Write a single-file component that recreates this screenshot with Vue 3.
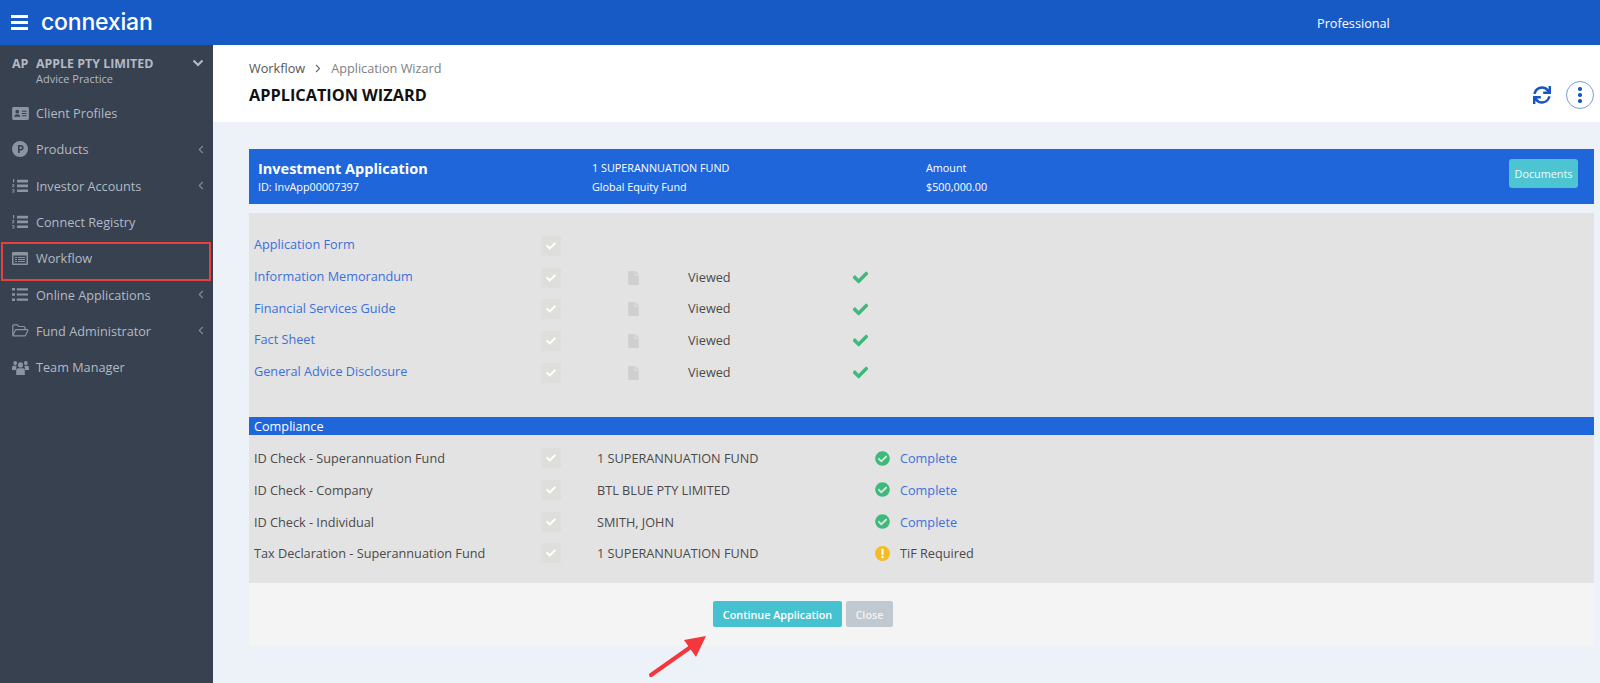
<script setup>
const menu = [
  { label: 'Client Profiles', icon: 'card' },
  { label: 'Products', icon: 'product', arrow: true },
  { label: 'Investor Accounts', icon: 'numbered', arrow: true },
  { label: 'Connect Registry', icon: 'numbered' },
  { label: 'Workflow', icon: 'workflow' },
  { label: 'Online Applications', icon: 'list', arrow: true },
  { label: 'Fund Administrator', icon: 'folder', arrow: true },
  { label: 'Team Manager', icon: 'users' }
]

const documents = [
  { name: 'Application Form', viewed: false },
  { name: 'Information Memorandum', viewed: true },
  { name: 'Financial Services Guide', viewed: true },
  { name: 'Fact Sheet', viewed: true },
  { name: 'General Advice Disclosure', viewed: true }
]

const compliance = [
  { name: 'ID Check - Superannuation Fund', entity: '1 SUPERANNUATION FUND', status: 'Complete', done: true },
  { name: 'ID Check - Company', entity: 'BTL BLUE PTY LIMITED', status: 'Complete', done: true },
  { name: 'ID Check - Individual', entity: 'SMITH, JOHN', status: 'Complete', done: true },
  { name: 'Tax Declaration - Superannuation Fund', entity: '1 SUPERANNUATION FUND', status: 'TiF Required', done: false }
]

const checkPath = 'M173.9 439.4l-166.4-166.4c-10-10-10-26.2 0-36.2l36.2-36.2c10-10 26.2-10 36.2 0L192 312.7 432.1 72.6c10-10 26.2-10 36.2 0l36.2 36.2c10 10 10 26.2 0 36.2l-294.4 294.4c-10 10-26.2 10-36.2 0z'
const circleCheckPath = 'M504 256c0 137-111 248-248 248S8 393 8 256 119 8 256 8s248 111 248 248zM227.3 387.3l184-184c6.2-6.2 6.2-16.4 0-22.6l-22.6-22.6c-6.2-6.2-16.4-6.2-22.6 0L216 308.1l-70.1-70.1c-6.2-6.2-16.4-6.2-22.6 0l-22.6 22.6c-6.2 6.2-6.2 16.4 0 22.6l104 104c6.2 6.3 16.4 6.3 22.6.1z'
const filePath = 'M224 136V0H24C10.7 0 0 10.7 0 24v464c0 13.3 10.7 24 24 24h336c13.3 0 24-10.7 24-24V160H248c-13.2 0-24-10.8-24-24zm160-14.1v6.1H256V0h6.1c6.4 0 12.5 2.5 17 7l97.9 98c4.5 4.5 7 10.6 7 16.9z'
const syncPath = 'M440.65 12.57l4 82.77A247.16 247.16 0 0 0 255.83 8C134.73 8 33.91 94.92 12.29 209.82A12 12 0 0 0 24.09 224h49.05a12 12 0 0 0 11.67-9.26 175.91 175.91 0 0 1 317-56.94l-101.46-4.86a12 12 0 0 0-12.57 12v47.41a12 12 0 0 0 12 12H500a12 12 0 0 0 12-12V12a12 12 0 0 0-12-12h-47.37a12 12 0 0 0-11.98 12.57zM255.83 432a175.61 175.61 0 0 1-146-77.8l101.8 4.87a12 12 0 0 0 12.57-12v-47.4a12 12 0 0 0-12-12H12a12 12 0 0 0-12 12V500a12 12 0 0 0 12 12h47.35a12 12 0 0 0 12-12.6l-4.15-82.57A247.17 247.17 0 0 0 255.83 504c121.11 0 221.93-86.92 243.55-201.82a12 12 0 0 0-11.8-14.18h-49.05a12 12 0 0 0-11.67 9.26A175.86 175.86 0 0 1 255.83 432z'
</script>

<template>
  <div class="app">
    <header class="topbar">
      <div class="burger"><span></span><span></span><span></span></div>
      <div class="logo">connexian</div>
      <div class="plan">Professional</div>
    </header>

    <div class="body">
      <aside class="sidebar">
        <div class="account">
          <span class="initials">AP</span>
          <div class="account-text">
            <div class="account-name">APPLE PTY LIMITED</div>
            <div class="account-type">Advice Practice</div>
          </div>
          <svg class="account-chevron" viewBox="0 0 12 8" width="12" height="8">
            <path d="M1.5 1.5 6 6l4.5-4.5" fill="none" stroke="currentColor" stroke-width="2.2" />
          </svg>
        </div>

        <nav>
          <a v-for="item in menu" :key="item.label" class="nav-item">
            <span class="nav-icon">
              <svg v-if="item.icon === 'card'" viewBox="0 0 18 14" width="17" height="13">
                <path fill="currentColor" fill-rule="evenodd" d="M1.5 0h15A1.5 1.5 0 0 1 18 1.500v11a1.500 1.500 0 0 1-1.500 1.500h-15A1.500 1.500 0 0 1 0 12.500v-11A1.500 1.500 0 0 1 1.500 0zM5.500 3a2 2 0 1 0 0 4 2 2 0 0 0 0-4zM2.200 10.500h6.600c0-1.500-1.400-2.700-3.300-2.700s-3.300 1.200-3.300 2.700zM10.500 4v1h5V4zm0 2.500v1h5v-1zm0 2.500v1h5V9z" />
              </svg>
              <svg v-else-if="item.icon === 'product'" viewBox="0 0 16 16" width="16" height="16">
                <path fill="currentColor" fill-rule="evenodd" d="M8 0a8 8 0 1 1 0 16A8 8 0 0 1 8 0zM6 4v8h1.700V9.400h1.200a2.700 2.700 0 0 0 0-5.400zm1.700 1.500h1.100a1.200 1.200 0 0 1 0 2.400H7.700z" />
              </svg>
              <svg v-else-if="item.icon === 'numbered'" viewBox="0 0 16 14" width="16" height="14">
                <path fill="currentColor" d="M5 .8h11v2.600H5zm0 4.800h11v2.600H5zm0 4.800h11V13H5zM1 0h1.200v3.600H1zM0 5.200h2.400v1L1 7.400h1.500v.8H0v-.8l1.400-1.300H0zm0 5h2.400v3.300H0v-.7h1.600v-.6H.6v-.6h1v-.6H0z" />
              </svg>
              <svg v-else-if="item.icon === 'workflow'" viewBox="0 0 16 13" width="16" height="13">
                <path fill="currentColor" fill-rule="evenodd" d="M1 0h14a1 1 0 0 1 1 1v11a1 1 0 0 1-1 1H1a1 1 0 0 1-1-1V1a1 1 0 0 1 1-1zm.500 3.500v8h13v-8zM3 5h2v1H3zm0 2h2v1H3zm0 2h2v1H3zm3-4h7v1H6zm0 2h7v1H6zm0 2h7v1H6z" />
              </svg>
              <svg v-else-if="item.icon === 'list'" viewBox="0 0 16 13" width="16" height="13">
                <path fill="currentColor" d="M0 0h3v2.600H0zm0 5.200h3v2.600H0zm0 5.200h3V13H0zM4.800.2H16v2.200H4.800zm0 5.200H16v2.200H4.800zm0 5.200H16v2.200H4.800z" />
              </svg>
              <svg v-else-if="item.icon === 'folder'" viewBox="0 0 17 13" width="17" height="13">
                <path fill="none" stroke="currentColor" stroke-width="1.200" d="M.8 11.500V1.800a1 1 0 0 1 1-1h3.500l1.600 1.700h5a1 1 0 0 1 1 1v1.700M.8 11.500l2.500-5.200a1 1 0 0 1 .9-.6h11a.7.700 0 0 1 .6 1l-2.200 4.600a1 1 0 0 1-.9.600H1.500a.7.700 0 0 1-.7-.4z" />
              </svg>
              <svg v-else viewBox="0 0 17 14" width="17" height="15" preserveAspectRatio="none">
                <path fill="currentColor" d="M3.200 1a1.900 1.900 0 1 1 0 3.800 1.900 1.900 0 0 1 0-3.800zm10.600 0a1.900 1.900 0 1 1 0 3.800 1.900 1.900 0 0 1 0-3.800zM8.500 2.200a2.500 2.500 0 1 1 0 5 2.500 2.500 0 0 1 0-5zM0 7.200c0-1 .7-1.800 1.600-1.800h2.200c.4 0 .7.100 1 .3-.4.600-.7 1.200-.7 2l-.1 1.600H0zm17 0c0-1-.7-1.800-1.600-1.800h-2.200c-.4 0-.7.100-1 .3.400.6.700 1.200.7 2l.1 1.600H17zM6 7.700h5c1 0 1.800.8 1.800 1.800V14H4.200V9.500c0-1 .8-1.800 1.800-1.800z" />
              </svg>
            </span>
            <span class="nav-label">{{ item.label }}</span>
            <svg v-if="item.arrow" class="nav-arrow" viewBox="0 0 6 9" width="6" height="9">
              <path d="M4.800 1 1.300 4.500 4.800 8" fill="none" stroke="currentColor" stroke-width="1.300" />
            </svg>
          </a>
        </nav>
      </aside>

      <main class="main">
        <div class="page-head">
          <div>
            <div class="crumbs">
              <span class="crumb-first">Workflow</span>
              <svg viewBox="0 0 6 9" width="6" height="9"><path d="M1 1l3.500 3.500L1 8" fill="none" stroke="#666" stroke-width="1.100" /></svg>
              <span class="crumb-last">Application Wizard</span>
            </div>
            <h1 class="title">APPLICATION WIZARD</h1>
          </div>
          <div class="head-actions">
            <svg viewBox="0 0 512 512" width="18" height="18"><path fill="#1557c2" :d="syncPath" /></svg>
            <span class="more"><i></i><i></i><i></i></span>
          </div>
        </div>

        <div class="content">
          <section class="app-card">
            <div class="app-col-a">
              <div class="app-title">Investment Application</div>
              <div class="app-id">ID: InvApp00007397</div>
            </div>
            <div class="app-col-b">
              <div class="app-line">1 SUPERANNUATION FUND</div>
              <div class="app-line">Global Equity Fund</div>
            </div>
            <div class="app-col-c">
              <div class="app-line">Amount</div>
              <div class="app-line">$500,000.00</div>
            </div>
            <button class="docs-btn">Documents</button>
          </section>

          <section class="panel">
            <div class="doc-rows">
              <div v-for="doc in documents" :key="doc.name" class="doc-row">
                <a class="link">{{ doc.name }}</a>
                <span class="tick">
                  <svg viewBox="0 0 512 512" width="10" height="10"><path fill="#fff" :d="checkPath" /></svg>
                </span>
                <template v-if="doc.viewed">
                  <svg class="file" viewBox="0 0 384 512" width="11" height="14"><path fill="#cfcfcf" :d="filePath" /></svg>
                  <span class="viewed">Viewed</span>
                  <svg class="green-check" viewBox="0 0 512 512" width="15" height="15"><path fill="#3cb97b" stroke="#3cb97b" stroke-width="28" :d="checkPath" /></svg>
                </template>
              </div>
            </div>

            <div class="section-bar">Compliance</div>

            <div class="check-rows">
              <div v-for="row in compliance" :key="row.name" class="check-row">
                <span>{{ row.name }}</span>
                <span class="tick">
                  <svg viewBox="0 0 512 512" width="10" height="10"><path fill="#fff" :d="checkPath" /></svg>
                </span>
                <span>{{ row.entity }}</span>
                <svg v-if="row.done" viewBox="0 0 512 512" width="15" height="15"><path fill="#3cb97b" :d="circleCheckPath" /></svg>
                <svg v-else viewBox="0 0 16 16" width="15" height="15">
                  <circle cx="8" cy="8" r="8" fill="#f5bd22" />
                  <rect x="6.900" y="3" width="2.200" height="6.500" rx="0.800" fill="#fff" />
                  <circle cx="8" cy="11.800" r="1.300" fill="#fff" />
                </svg>
                <a v-if="row.done" class="link">{{ row.status }}</a>
                <span v-else>{{ row.status }}</span>
              </div>
            </div>
          </section>

          <footer class="actions">
            <button class="btn btn-continue">Continue Application</button>
            <button class="btn btn-close">Close</button>
          </footer>
        </div>
      </main>
    </div>

    <!-- annotation marks laid over the screenshot -->
    <div class="mark-box"></div>
    <svg class="mark-arrow" viewBox="0 0 64 46" width="64" height="46">
      <path d="M3 43 47 12" stroke="#f4373c" stroke-width="4" stroke-linecap="round" fill="none" />
      <path d="M58 4 36 8l12 17z" fill="#f4373c" />
    </svg>
  </div>
</template>

<style>
html,
body {
  margin: 0;
  background: #edf1f8;
}
</style>

<style scoped>
.app {
  position: relative;
  width: 1600px;
  height: 683px;
  overflow: hidden;
  display: flex;
  flex-direction: column;
  background: #edf1f8;
  font-family: "Open Sans", sans-serif;
  font-size: 12.700px;
  color: #4a4a4a;
}

.topbar {
  height: 45px;
  flex: none;
  display: flex;
  align-items: center;
  background: #175ac6;
  color: #fff;
}

.burger {
  margin-left: 11px;
  width: 17px;
  display: flex;
  flex-direction: column;
  gap: 3px;
}

.burger span {
  height: 3px;
  background: #fff;
}

.logo {
  margin-left: 13px;
  font-family: Inter, sans-serif;
  font-size: 23px;
  font-weight: 500;
  letter-spacing: -0.2px;
  line-height: 1;
  width: 1276px;
}

.body {
  flex: 1;
  display: flex;
  min-height: 0;
}

.sidebar {
  width: 213px;
  flex: none;
  background: #374150;
  color: #b3b9c4;
}

.account {
  height: 50px;
  box-sizing: border-box;
  padding: 11px 9px 0 12px;
  display: flex;
  align-items: flex-start;
}

.initials {
  width: 24px;
  font-size: 12.500px;
  font-weight: 700;
  line-height: 15px;
}

.account-text {
  flex: 1;
}

.account-name {
  font-size: 12.400px;
  font-weight: 700;
  line-height: 15px;
}

.account-type {
  font-size: 11px;
  line-height: 16px;
}

.account-chevron {
  margin-top: 3px;
}

.nav-item {
  height: 36.300px;
  display: flex;
  align-items: center;
}

.nav-icon {
  width: 24px;
  margin-left: 12px;
  display: flex;
  align-items: center;
  color: #8d94a1;
}

.nav-label {
  flex: 1;
}

.nav-arrow {
  margin-right: 9px;
  color: #7f8693;
}

.main {
  flex: 1;
  display: flex;
  flex-direction: column;
  min-width: 0;
}

.page-head {
  height: 77px;
  flex: none;
  box-sizing: border-box;
  padding: 14px 6px 0 36px;
  background: #fff;
  display: flex;
  justify-content: space-between;
}

.crumbs {
  display: flex;
  align-items: center;
  gap: 10px;
  line-height: 18px;
}

.crumb-first {
  color: #555;
}

.crumb-last {
  color: #808080;
}

.title {
  margin: 8px 0 0;
  font-size: 16.300px;
  font-weight: 700;
  line-height: 20px;
  color: #111;
}

.head-actions {
  display: flex;
  align-items: center;
  gap: 15px;
  height: 28px;
  margin-top: 22px;
}

.more {
  width: 28px;
  height: 28px;
  box-sizing: border-box;
  border: 1px solid #7a9be0;
  border-radius: 50%;
  display: flex;
  flex-direction: column;
  align-items: center;
  justify-content: center;
  gap: 2.500px;
}

.more i {
  width: 3.500px;
  height: 3.500px;
  border-radius: 50%;
  background: #1557c2;
}

.content {
  flex: 1;
  padding: 27px 6px 0 36px;
}

.app-card {
  height: 55px;
  box-sizing: border-box;
  padding-left: 9px;
  display: flex;
  align-items: center;
  background: #1f66db;
  color: #fff;
}

.app-col-a {
  width: 334px;
}

.app-col-b {
  width: 334px;
}

.app-col-c {
  flex: 1;
}

.app-title {
  font-size: 14.500px;
  font-weight: 700;
  line-height: 20px;
}

.app-id {
  font-size: 10.800px;
  line-height: 16px;
}

.app-line {
  font-size: 10.800px;
  line-height: 19px;
}

.docs-btn {
  align-self: flex-start;
  width: 69px;
  height: 29px;
  margin: 10px 16px 0 0;
  padding: 0;
  border: 0;
  border-radius: 3px;
  background: #4cc4d2;
  color: #f2fbfc;
  font: 500 10.800px "Open Sans", sans-serif;
}

.panel {
  margin-top: 9px;
  height: 370px;
  box-sizing: border-box;
  padding-top: 17px;
  background: #e3e3e3;
}

.doc-row,
.check-row {
  height: 31.700px;
  padding-left: 5px;
  display: grid;
  align-items: center;
}

.doc-row {
  grid-template-columns: 287px 87px 60px 165px 20px;
}

.check-row {
  grid-template-columns: 287px 56px 278px 25px 1fr;
}

.link {
  color: #3c70d9;
}

.doc-row .link {
  margin-bottom: 3px;
}

.doc-row .viewed {
  margin-bottom: 2px;
}

.tick {
  width: 20px;
  height: 20px;
  display: flex;
  align-items: center;
  justify-content: center;
  background: #dededa;
}

.section-bar {
  margin-top: 29px;
  height: 18px;
  padding-left: 5px;
  background: #1f66db;
  color: #fff;
  line-height: 18px;
}

.check-rows {
  margin-top: 7px;
}

.actions {
  height: 63px;
  box-sizing: border-box;
  padding: 18px 0 0 464px;
  display: flex;
  gap: 4px;
  background: #f4f4f4;
}

.btn {
  height: 26px;
  padding: 0;
  border: 0;
  border-radius: 2px;
  color: #fff;
  font: 600 10.800px "Open Sans", sans-serif;
}

.btn-continue {
  width: 129px;
  background: #46c1cf;
}

.btn-close {
  width: 47px;
  background: #c0c9d0;
  color: #f0f2f4;
}

.mark-box {
  position: absolute;
  left: 1px;
  top: 242px;
  width: 206px;
  height: 35px;
  border: 2px solid #e8403f;
}

.mark-arrow {
  position: absolute;
  left: 648px;
  top: 632px;
}
</style>
